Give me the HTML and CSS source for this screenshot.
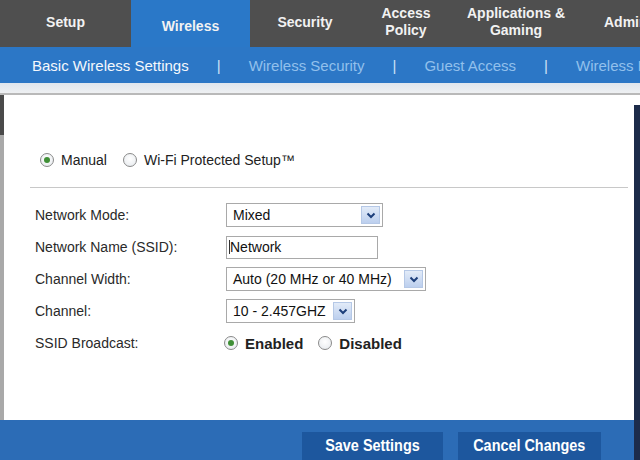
FILE: index.html
```html
<!DOCTYPE html>
<html lang="en">
<head>
    <meta charset="UTF-8">
    <title>Wireless - Basic Wireless Settings</title>
    <link rel="stylesheet" href="styles.css">
</head>
<body>

<div class="tabs">
    <div class="tab tab-setup">Setup</div>
    <div class="tab tab-wireless active">Wireless</div>
    <div class="tab tab-security">Security</div>
    <div class="tab tab-access">Access<br>Policy</div>
    <div class="tab tab-apps">Applications &amp;<br>Gaming</div>
    <div class="tab tab-admin">Administration</div>
</div>

<div class="subnav">
    <span class="sub current">Basic Wireless Settings</span>
    <span class="sep">|</span>
    <span class="sub">Wireless Security</span>
    <span class="sep">|</span>
    <span class="sub">Guest Access</span>
    <span class="sep">|</span>
    <span class="sub">Wireless MAC Filter</span>
</div>

<div class="strip"></div>

<div class="content">
    <div class="mode-row">
        <span class="radio checked"></span><span class="mode-label">Manual</span>
        <span class="radio"></span><span class="mode-label">Wi-Fi Protected Setup™</span>
    </div>

    <div class="divider"></div>

    <div class="form-row">
        <div class="label">Network Mode:</div>
        <div class="select w-mode"><span class="value">Mixed</span><span class="arrow"><svg width="10" height="7" viewBox="0 0 10 7"><path d="M1.5 1.5 L5 5 L8.5 1.5" fill="none" stroke="#1d3f7a" stroke-width="2"/></svg></span></div>
    </div>
    <div class="form-row">
        <div class="label">Network Name (SSID):</div>
        <div class="textbox"><span class="caret"></span>Network</div>
    </div>
    <div class="form-row">
        <div class="label">Channel Width:</div>
        <div class="select w-width"><span class="value">Auto (20 MHz or 40 MHz)</span><span class="arrow"><svg width="10" height="7" viewBox="0 0 10 7"><path d="M1.5 1.5 L5 5 L8.5 1.5" fill="none" stroke="#1d3f7a" stroke-width="2"/></svg></span></div>
    </div>
    <div class="form-row">
        <div class="label">Channel:</div>
        <div class="select w-channel"><span class="value">10 - 2.457GHZ</span><span class="arrow"><svg width="10" height="7" viewBox="0 0 10 7"><path d="M1.5 1.5 L5 5 L8.5 1.5" fill="none" stroke="#1d3f7a" stroke-width="2"/></svg></span></div>
    </div>
    <div class="form-row">
        <div class="label">SSID Broadcast:</div>
        <div class="bcast">
            <span class="radio checked"></span><span class="bold-label">Enabled</span>
            <span class="radio"></span><span class="bold-label">Disabled</span>
        </div>
    </div>
</div>

<div class="footer">
    <div class="btn btn-save"><span>Save Settings</span></div>
    <div class="btn btn-cancel"><span>Cancel Changes</span></div>
</div>

</body>
</html>
```

FILE: styles.css
```css
body {
    margin: 0;
    width: 640px;
    height: 460px;
    overflow: hidden;
    font-family: "Liberation Sans", Arial, sans-serif;
    background-color: #ffffff;
    color: #222;
}

/* top tabs */
.tabs {
    display: flex;
    height: 47px;
    background-color: #4f4f4f;
    white-space: nowrap;
    overflow: hidden;
}

.tab {
    flex: none;
    display: flex;
    align-items: center;
    justify-content: center;
    text-align: center;
    color: #f2f2f2;
    font-weight: bold;
    font-size: 14px;
    line-height: 17px;
    padding-bottom: 3px;
    box-sizing: border-box;
}

.tab-setup { width: 131px; }
.tab-wireless { width: 119px; }
.tab-security { width: 110px; }
.tab-access { width: 92px; }
.tab-apps { width: 128px; }
.tab-admin { width: 120px; justify-content: flex-start; padding-left: 24px; }

.tab.active {
    background-color: #2a78c8;
    padding-top: 6px;
    padding-bottom: 0;
}

/* sub navigation */
.subnav {
    display: flex;
    align-items: center;
    height: 36px;
    background-color: #2c77c6;
    font-size: 15px;
    padding-left: 32px;
    white-space: nowrap;
    overflow: hidden;
}

.sub {
    color: #92c0ec;
}

.sub.current {
    color: #f4f8fc;
}

.sep {
    color: #cfe2f6;
    margin: 0 28px 0 28px;
}

.strip {
    height: 10px;
    background: linear-gradient(#dfe6ee, #eef0f2);
    border-bottom: 2px solid #b9b9b9;
}

/* content area */
.content {
    height: 325px;
    border-left: 4px solid #a9a9a9;
    box-sizing: border-box;
    padding-top: 55px;
    position: relative;
}

.content::before {
    content: "";
    position: absolute;
    left: -4px;
    top: 0;
    width: 4px;
    height: 40px;
    background-color: #4a4a4a;
}

.content::after {
    content: "";
    position: absolute;
    right: 0;
    top: 10px;
    bottom: 0;
    width: 6px;
    background-color: #1d2b4a;
}

.mode-row {
    display: flex;
    align-items: center;
    height: 20px;
    padding-left: 36px;
    font-size: 14px;
}

.mode-label {
    margin-left: 7px;
    margin-right: 16px;
}

.radio {
    display: inline-block;
    width: 12px;
    height: 12px;
    border: 1px solid #8a8a8a;
    border-radius: 50%;
    background: radial-gradient(circle at 50% 40%, #ffffff, #e4e8ec);
    position: relative;
    flex: none;
}

.radio.checked::after {
    content: "";
    position: absolute;
    left: 3px;
    top: 3px;
    width: 6px;
    height: 6px;
    border-radius: 50%;
    background-color: #3f8f36;
}

.divider {
    height: 1px;
    background-color: #c8c8c8;
    margin: 17px 12px 11px 26px;
}

.form-row {
    display: flex;
    align-items: center;
    height: 32px;
    font-size: 14px;
}

.label {
    width: 191px;
    padding-left: 31px;
    flex: none;
    color: #2a2a2a;
}

.select {
    display: flex;
    align-items: center;
    justify-content: space-between;
    height: 24px;
    border: 1px solid #a9a9a9;
    box-sizing: border-box;
    padding: 0 2px 0 6px;
    background-color: #fff;
    color: #111;
}

.w-mode { width: 157px; }
.w-width { width: 200px; }
.w-channel { width: 129px; }

.arrow {
    width: 19px;
    height: 18px;
    box-sizing: border-box;
    border: 1px solid #b5c8e6;
    background: linear-gradient(#e2ebf8, #bccfee);
    display: flex;
    align-items: center;
    justify-content: center;
}

.textbox {
    display: flex;
    align-items: center;
    width: 152px;
    height: 23px;
    border: 1px solid #a9a9a9;
    box-sizing: border-box;
    padding-left: 2px;
    color: #111;
}

.caret {
    width: 1px;
    height: 14px;
    background-color: #333;
}

.bcast {
    display: flex;
    align-items: center;
    margin-left: -2px;
}

.bold-label {
    font-weight: bold;
    font-size: 15px;
    margin-left: 7px;
    margin-right: 15px;
    color: #222;
}

/* footer buttons */
.footer {
    display: flex;
    height: 40px;
    background-color: #2c6cb6;
    border-right: 6px solid #1d2b4a;
    box-sizing: border-box;
    padding: 12px 0 0 302px;
    gap: 15px;
}

.btn {
    height: 28px;
    background-color: #1d579e;
    color: #ffffff;
    font-weight: bold;
    font-size: 16px;
    display: flex;
    justify-content: center;
    padding-top: 5px;
    box-sizing: border-box;
}

.btn span {
    display: inline-block;
    transform: scaleX(0.9);
    white-space: nowrap;
}

.btn-save { width: 141px; }
.btn-cancel { width: 143px; }
```
